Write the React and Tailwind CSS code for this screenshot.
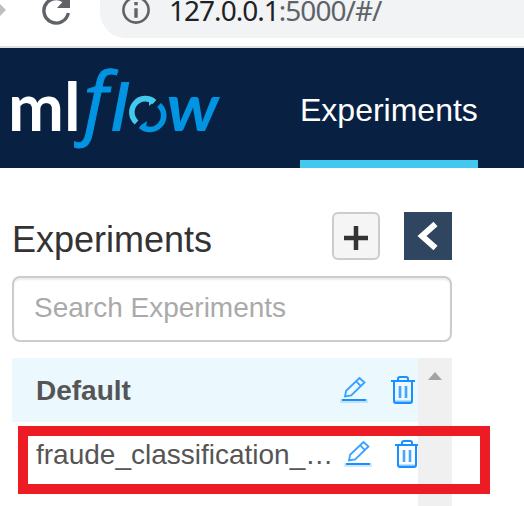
import React from "react";

function AddressBar() {
  return (
    <div className="flex h-12 items-start overflow-hidden border-b-2 border-[#dee1e0] bg-white">
      <svg className="h-[46px] w-[100px] shrink-0" viewBox="0 0 100 46">
        <path d="M0 4 6 10 0 16Z" fill="#bdbec0" />
        <path d="M66.5 4A12.3 12.3 0 1 0 68.3 13" fill="none" stroke="#5f6368" strokeWidth="3.4" />
        <path d="M70 -6V8H57Z" fill="#5f6368" />
      </svg>
      <div className="flex h-[38px] flex-1 rounded-bl-[26px] bg-[#f1f3f4]">
        <svg className="ml-5 h-[38px] w-8 shrink-0" viewBox="0 0 32 38">
          <circle cx="16" cy="10" r="12.6" fill="none" stroke="#5f6368" strokeWidth="2.6" />
          <path d="M14.3 2h3.4v3.2h-3.4zM14.3 8.2h3.4v9.5h-3.4z" fill="#5f6368" />
        </svg>
        <span className="ml-[17px] font-['Noto_Sans',sans-serif] text-[28px] leading-5 tracking-[-0.98px] whitespace-nowrap text-[#5f6368]">
          <span className="text-[#202124]">127.0.0.1</span>:5000/#/
        </span>
      </div>
    </div>
  );
}

function Logo() {
  return (
    <svg className="h-[120px] w-[300px] shrink-0 overflow-visible" viewBox="0 48 300 120">
      <g fontFamily="Lato, sans-serif">
        <text x="8" y="131" fontSize="66" fontWeight="700" fill="#fff" textLength="72.5" lengthAdjust="spacingAndGlyphs">ml</text>
        <text transform="translate(110.5 131) skewX(-4)" fontSize="66" fontWeight="700" fontStyle="italic" fill="#0194e2">l</text>
        <text transform="translate(166.5 131)" fontSize="66" fontWeight="700" fontStyle="italic" fill="#0194e2" textLength="52.5" lengthAdjust="spacingAndGlyphs">w</text>
      </g>
      <text
        transform="translate(83.5 129)"
        fontFamily="Open Sans, sans-serif"
        fontSize="78.5"
        fontWeight="400"
        fontStyle="italic"
        fill="#0194e2"
        stroke="#0194e2"
        strokeWidth="1"
      >
        f
      </text>
      <path d="M136.5 122.5A13.5 13.5 0 0 1 154.5 102" fill="none" stroke="#43c9ed" strokeWidth="5.6" />
      <path d="M159 105A13.5 13.5 0 0 1 140.5 126" fill="none" stroke="#0194e2" strokeWidth="5.6" />
      <path d="M149 101 155 101 149 106Z" fill="#43c9ed" />
      <path d="M147 121 140 126 146 128Z" fill="#0194e2" />
    </svg>
  );
}

function EditIcon() {
  return (
    <svg className="mt-px h-7 w-7 shrink-0" viewBox="0 0 28 28" fill="none" stroke="#1890ff">
      <path d="M5 21.5 6.1 15.8 19.5 3 24.5 7.5 11.2 20.4ZM16.2 6.3l4.5 4.5" strokeWidth="1.8" opacity=".85" />
      <path d="M0 26h28" strokeWidth="4" opacity=".2" />
      <path d="M2 25h24" strokeWidth="2" />
    </svg>
  );
}

function TrashIcon() {
  return (
    <svg className="mt-[2px] h-7 w-6 shrink-0" viewBox="0 0 24 28" fill="none" stroke="#1890ff" strokeWidth="2">
      <path d="M0 5h24M7 5V3q0-2 2-2h6q2 0 2 2v2M3 5v20q0 2 2 2h14q2 0 2-2V5" />
      <path d="M9 10v12M15 10v12" strokeWidth="2.6" opacity=".8" />
      <path d="M3 25.5h18" strokeWidth="2" opacity=".5" />
    </svg>
  );
}

function ExperimentList() {
  return (
    <div className="relative mt-4 flex h-[148px] w-[440px]">
      <div className="w-[406px] overflow-hidden text-[28px] leading-[34px] text-[#555]">
        <div className="flex h-16 bg-[#ebf8fe] pl-6 pt-4">
          <span className="w-[304px] shrink-0 font-bold">Default</span>
          <EditIcon />
          <span className="ml-[23px] flex"><TrashIcon /></span>
        </div>
        <div className="flex h-16 pl-6 pt-4">
          <span className="w-[308px] shrink-0 whitespace-nowrap">fraude_classification_…</span>
          <EditIcon />
          <span className="ml-[23px] flex"><TrashIcon /></span>
        </div>
      </div>
      <div className="w-[34px] bg-[#f0f0f0]">
        <svg className="h-8 w-[34px]" viewBox="0 0 34 32">
          <path d="M10 22 17 14 24 22Z" fill="#a3a3a3" />
        </svg>
      </div>
      <div className="absolute left-[6px] top-[68px] h-[68px] w-[472px] border-[10px] border-[#ed1c24]" />
    </div>
  );
}

export default function App() {
  return (
    <div className="h-[506px] w-[524px] overflow-hidden bg-white font-['Liberation_Sans',Arial,sans-serif]">
      <AddressBar />
      <header className="flex h-[120px] bg-[#082142]">
        <Logo />
        <nav className="flex h-[120px] w-[178px] border-b-8 border-[#43c9ed] pt-[44px] text-[32px] leading-9 text-white">
          Experiments
        </nav>
      </header>
      <main className="px-3 pt-11">
        <div className="flex h-12 w-[440px]">
          <h1 className="w-[320px] pt-2 text-[36px] leading-10 text-[#333]">Experiments</h1>
          <button className="flex h-12 w-12 items-center justify-center rounded-md border-2 border-[#ccc] bg-[#f5f5f5] pt-1">
            <svg className="h-6 w-6" viewBox="0 0 24 24">
              <path d="M0 12h24M12 0v24" stroke="#333" strokeWidth="4.5" />
            </svg>
          </button>
          <button className="ml-6 flex h-12 w-12 items-center justify-center bg-[#30455f]">
            <svg className="h-12 w-12" viewBox="0 0 48 48">
              <path d="M31.5 12 18 24 31.5 36" fill="none" stroke="#fff" strokeWidth="6" />
            </svg>
          </button>
        </div>
        <div className="mt-4 h-[66px] w-[440px] rounded-lg border-2 border-[#ccc] pl-5 pt-[14px] text-[28px] leading-8 text-[#aaa] shadow-[inset_0_2px_2px_rgba(0,0,0,0.075)]">
          Search Experiments
        </div>
        <ExperimentList />
      </main>
    </div>
  );
}
